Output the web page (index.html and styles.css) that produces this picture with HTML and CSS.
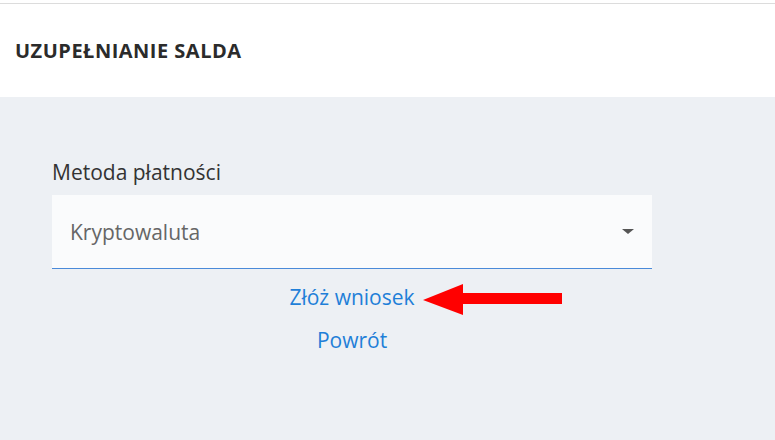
FILE: index.html
```html
<!DOCTYPE html>
<html lang="pl">
<head>
  <meta charset="UTF-8">
  <meta name="viewport" content="width=device-width, initial-scale=1">
  <title>Uzupełnianie salda</title>
  <link rel="stylesheet" href="styles.css">
</head>
<body>

  <div class="topline"></div>
  <header class="header">
    <h1>UZUPEŁNIANIE SALDA</h1>
  </header>

  <main class="content">
    <form class="form">
      <label class="label" for="method">Metoda płatności</label>
      <div class="select">
        <span class="select-value">Kryptowaluta</span>
        <span class="caret"></span>
      </div>

      <div class="actions">
        <a href="#" class="link submit">Złóż wniosek
          <svg class="arrow" width="142" height="34" viewBox="0 0 142 34">
            <polygon points="0,16 40,0 40,9 139,9 139,20 40,20 40,31" fill="#ff0000"/>
          </svg>
        </a>
        <a href="#" class="link">Powrót</a>
      </div>
    </form>
  </main>

</body>
</html>
```

FILE: styles.css
```css
html, body {
  margin: 0;
  padding: 0;
}
body {
  font-family: "Open Sans", Arial, sans-serif;
  background: #edf0f4;
  color: #333;
}
.topline {
  height: 3px;
  background: #fff;
  border-bottom: 1px solid #dcdcdc;
}
.header {
  background: #fff;
  height: 93px;
  display: flex;
  align-items: center;
  padding-left: 15px;
}
.header h1 {
  margin: 0;
  font-size: 20px;
  font-weight: 700;
  color: #2b2b2b;
  letter-spacing: 0.5px;
}
.content {
  padding: 62px 52px 0;
}
.form {
  width: 600px;
}
.label {
  display: block;
  font-size: 21px;
  color: #333;
  line-height: 26px;
  margin-bottom: 10px;
}
.select {
  height: 74px;
  background: #fafbfc;
  border-bottom: 1px solid #4a8ad9;
  display: flex;
  align-items: center;
  justify-content: space-between;
  padding: 0 18px;
  box-sizing: border-box;
}
.select-value {
  font-size: 21px;
  color: #666;
}
.caret {
  width: 0;
  height: 0;
  border-left: 6px solid transparent;
  border-right: 6px solid transparent;
  border-top: 5px solid #555;
}
.actions {
  display: flex;
  flex-direction: column;
  align-items: center;
  gap: 17px;
  padding-top: 15px;
}
.link {
  color: #1f7fd8;
  text-decoration: none;
  font-size: 21px;
  line-height: 26px;
  position: relative;
}
.arrow {
  position: absolute;
  left: 100%;
  top: 0;
  margin-left: 8px;
}
```
